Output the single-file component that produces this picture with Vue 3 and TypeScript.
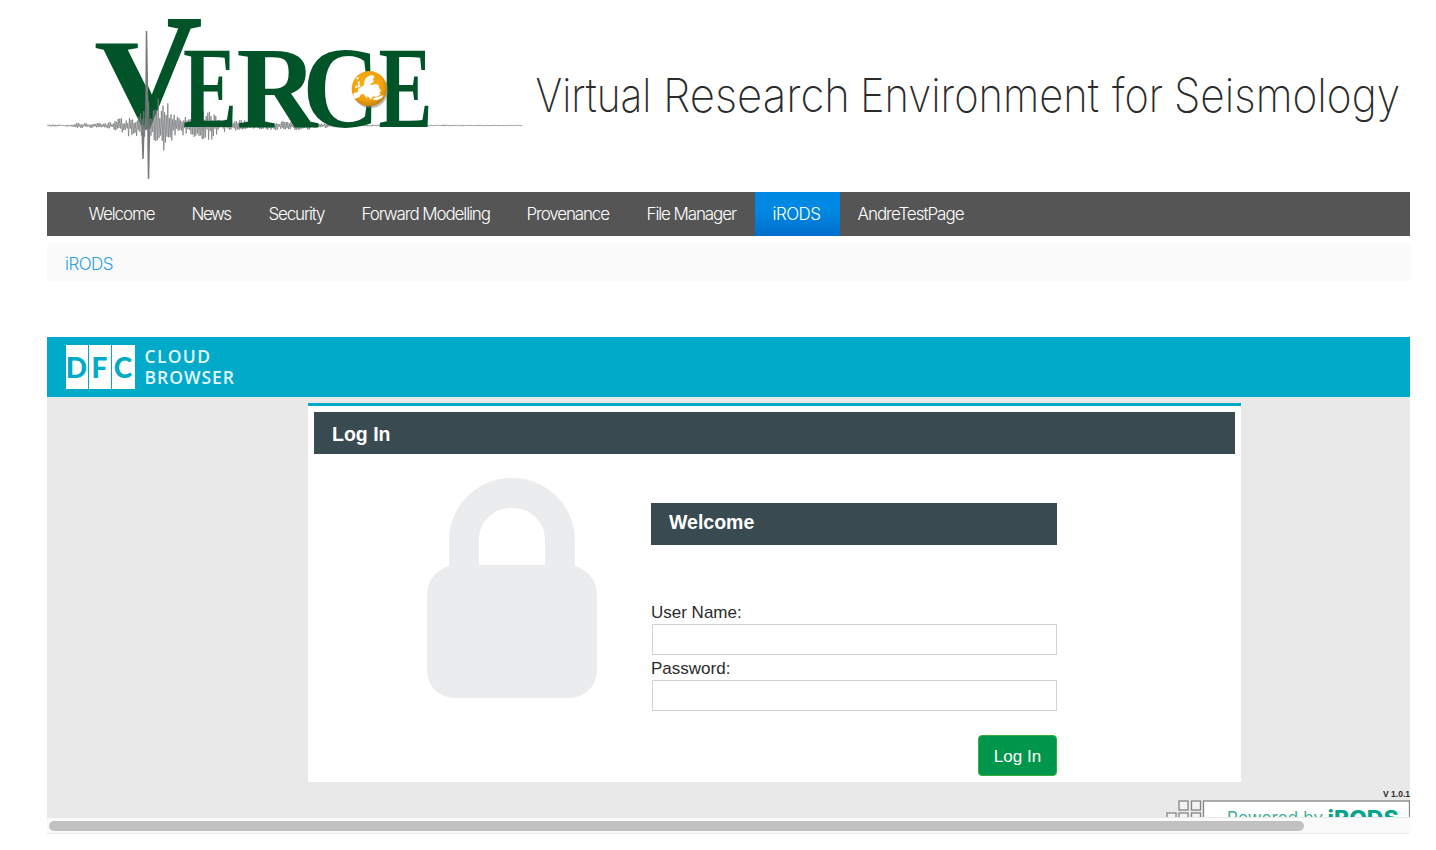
<script setup lang="ts">
import { ref } from 'vue'

interface NavItem {
  label: string
  width: number
  active?: boolean
}

const navItems: NavItem[] = [
  { label: 'Welcome', width: 67 },
  { label: 'News', width: 40.5 },
  { label: 'Security', width: 57 },
  { label: 'Forward Modelling', width: 129.5 },
  { label: 'Provenance', width: 83.5 },
  { label: 'File Manager', width: 90.5 },
  { label: 'iRODS', width: 48.5, active: true },
  { label: 'AndreTestPage', width: 107 },
]

const taglineWords = [
  { text: 'Virtual', x: 0.5, width: 116 },
  { text: 'Research', x: 128, width: 187 },
  { text: 'Environment', x: 325, width: 239 },
  { text: 'for', x: 577, width: 51 },
  { text: 'Seismology', x: 639, width: 226 },
]

const userName = ref('')
const password = ref('')

// Amplitude envelope of the seismogram: [x, up, down]
const envelope: [number, number, number][] = [
  [0, 1, 1], [26, 1, 1], [30, 3, 3], [62, 3, 3], [72, 7, 8], [90, 9, 14], [98, 26, 16],
  [106, 24, 22], [112, 28, 26], [122, 24, 26], [130, 13, 10], [142, 14, 10], [150, 17, 15],
  [165, 17, 15], [172, 7, 7], [200, 5, 5], [225, 5, 5], [260, 3, 4], [285, 2, 2], [310, 1, 1], [476, 0.5, 0.5],
]

function amplitude(x: number): [number, number] {
  for (let i = 1; i < envelope.length; i++) {
    const a = envelope[i - 1]
    const b = envelope[i]
    if (x <= b[0]) {
      const t = (x - a[0]) / (b[0] - a[0])
      return [a[1] + (b[1] - a[1]) * t, a[2] + (b[2] - a[2]) * t]
    }
  }
  return [0.5, 0.5]
}

function buildTrace(): string {
  let seed = 17
  let d = 'M0 107.5'
  for (let x = 0.8; x < 476; x += 0.8) {
    seed = (seed * 16807) % 2147483647
    const r = 0.25 + 0.75 * Math.pow(seed / 2147483647, 1.2)
    const [up, down] = amplitude(x)
    const odd = Math.round(x / 0.8) % 2 === 1
    d += `L${x.toFixed(1)} ${(107.5 + (odd ? -up : down) * r).toFixed(1)}`
  }
  return d
}

const trace = buildTrace()
</script>

<template>
  <div class="page">
    <header class="banner">
      <svg class="verce" width="477" height="170" viewBox="0 0 477 170">
        <defs>
          <clipPath id="armLeft"><rect x="0" y="0" width="101" height="170" /></clipPath>
          <clipPath id="armRight"><path d="M101 -5H190V170H96V108L101 96z" /></clipPath>
          <radialGradient id="globe" cx="0.45" cy="0.4" r="0.62">
            <stop offset="0" stop-color="#fbb117" />
            <stop offset="0.7" stop-color="#f0a20c" />
            <stop offset="1" stop-color="#bd7d10" />
          </radialGradient>
          <text id="vee" class="serif" x="0" y="0" font-size="100">V</text>
        </defs>
        <g clip-path="url(#armLeft)"><use href="#vee" transform="translate(47 109) scale(1.48 1.28)" /></g>
        <g clip-path="url(#armRight)"><use href="#vee" transform="translate(38.500 108) scale(1.610 1.600)" stroke="#005427" stroke-width="1.200" /></g>
        <path :d="trace" fill="none" stroke="#77797b" stroke-width="0.75" />
        <path d="M98.800 112L99.500 13L100.800 100L101.500 161L102.500 112M95 107L96 141L97 107" fill="none" stroke="#77797b" stroke-width="1.500" />
        <g class="serif" font-size="117">
          <text x="136" y="109" textLength="54" lengthAdjust="spacingAndGlyphs">E</text>
          <text x="189.500" y="109" textLength="81" lengthAdjust="spacingAndGlyphs">R</text>
          <text x="255.500" y="109" textLength="77" lengthAdjust="spacingAndGlyphs">C</text>
          <text x="331.500" y="109" textLength="54" lengthAdjust="spacingAndGlyphs">E</text>
        </g>
        <circle cx="323.500" cy="72.500" r="17.800" fill="#777" opacity="0.45" />
        <circle cx="322.300" cy="70.700" r="17.600" fill="url(#globe)" />
        <path
          transform="translate(298 46) scale(0.3333)"
          fill="#fff"
          d="M57 54l6-12 10-7 11-2 4 6-4 6 2 8-6 5-6 5 8 0 8-3 10 2 3 10 5 8-5 7 4 6-8 2-7 5-6-3-6 4-2 7-5-7-7-6 2 9-5-5-7-8-7-1-5 8-12 6-7-4 1-13 13-3 0-8 8-6 8-4 4-9zM37 53l7-1 0 8 3 8-10 3 3-9zM33 64l4 2-2 6-5 0zM34 41l7-2 0 5-6 3zM84 103l14-4 17-6-4 9-14 6-11 0z"
        />
      </svg>
      <svg class="tagline" width="880" height="70" viewBox="0 0 880 70">
        <text
          v-for="word in taglineWords"
          :key="word.text"
          :x="word.x"
          y="50"
          :textLength="word.width"
          lengthAdjust="spacingAndGlyphs"
        >{{ word.text }}</text>
      </svg>
    </header>

    <nav class="nav">
      <a v-for="item in navItems" :key="item.label" class="nav-item" :class="{ active: item.active }">
        <svg :width="item.width" height="30">
          <text x="-0.500" y="20" :textLength="item.width">{{ item.label }}</text>
        </svg>
      </a>
    </nav>

    <div class="crumbs">
      <svg width="50" height="30">
        <text x="0" y="20" textLength="48.500">iRODS</text>
      </svg>
    </div>

    <main class="frame">
      <div class="cloudbar">
        <div class="tiles"><span>D</span><span>F</span><span>C</span></div>
        <svg class="cloud-name" width="94" height="44" viewBox="0 0 94 44">
          <text x="-0.500" y="18" textLength="65.500">CLOUD</text>
          <text x="-0.500" y="38.500" textLength="89.500">BROWSER</text>
        </svg>
      </div>

      <section class="panel">
        <h2 class="bar">Log In</h2>
        <div class="panel-body">
          <svg class="lock" width="170" height="220" viewBox="0 0 170 220">
            <path fill="#ebeced" fill-rule="evenodd" d="M22 88V63C22 28 50 0 85 0s63 28 63 63v25c13 4 22 15 22 29v75c0 16-12 28-28 28H28c-16 0-28-12-28-28v-75c0-14 9-25 22-29zM52 87h66V62c0-18-14-32-33-32S52 44 52 62z" />
          </svg>
          <form class="login" @submit.prevent>
            <h2 class="bar welcome">Welcome</h2>
            <label for="user">User Name:</label>
            <input id="user" v-model="userName" type="text" />
            <label for="pass">Password:</label>
            <input id="pass" v-model="password" type="password" />
            <button type="submit">Log In</button>
          </form>
        </div>
      </section>

      <div class="version">V 1.0.1</div>
      <svg class="powered" width="244" height="17" viewBox="0 0 244 17">
        <g fill="#f3f3f3" stroke="#858585" stroke-width="1.300">
          <rect x="13" y="1" width="9" height="9" />
          <rect x="25.500" y="1" width="9" height="9" />
          <rect x="1" y="13" width="9" height="9" />
          <rect x="13" y="13" width="9" height="9" />
          <rect x="25.500" y="13" width="9" height="9" />
          <rect x="37.500" y="1" width="206" height="40" fill="#fff" />
        </g>
        <text class="by" x="61" y="23.500" textLength="96">Powered by</text>
        <text class="brand" x="161.500" y="25.500" textLength="71" lengthAdjust="spacingAndGlyphs">iRODS</text>
      </svg>
    </main>
    <div class="scroll"><div class="thumb"></div></div>
  </div>
</template>

<style>
body {
  background: #fff;
  overflow: hidden;
}
</style>

<style scoped>
.page {
  width: 1363px;
  height: 850px;
  padding-left: 47px;
  font-family: "Liberation Sans", Arial, sans-serif;
  color: #2b2b2b;
}
.banner {
  display: flex;
  height: 192px;
}
.verce {
  margin-top: 18px;
  overflow: visible;
}
.serif {
  font-family: "Liberation Serif", serif;
  font-weight: 700;
  fill: #005427;
}
.tagline {
  margin: 62px 0 0 11px;
  overflow: visible;
}
.tagline text {
  font: 200 47px Inter, sans-serif;
  fill: #2b2b2b;
}
.nav {
  display: flex;
  height: 44px;
  padding-left: 24px;
  background: #555;
}
.nav-item {
  padding: 8px 18px 0;
}
.nav-item svg,
.crumbs svg {
  display: block;
  overflow: visible;
}
.nav-item text,
.crumbs text {
  font: 300 17px Inter, sans-serif;
  fill: #fff;
}
.nav-item.active {
  background: linear-gradient(#0089e3 40%, #006fcb);
}
.crumbs {
  box-sizing: border-box;
  height: 38px;
  margin-top: 7px;
  padding: 7px 18px;
  background: #fafafa;
  border-radius: 3px;
}
.crumbs text {
  fill: #2b9de9;
}
.frame {
  height: 481px;
  margin-top: 55.500px;
  overflow: hidden;
  background: #e9e9e9;
}
.cloudbar {
  display: flex;
  box-sizing: border-box;
  height: 60.500px;
  padding: 8.500px 18.500px;
  background: #00aac8;
}
.tiles {
  display: grid;
  grid-template-columns: 22px 22px 23px;
  gap: 1px;
  height: 44px;
}
.tiles span {
  background: #fff;
  color: #00aac8;
  font: 900 28px/44px Lato, sans-serif;
  text-align: center;
}
.cloud-name {
  margin-left: 10px;
  overflow: visible;
}
.cloud-name text {
  font: 600 17.500px "Open Sans", sans-serif;
  fill: #e4f7fb;
}
.panel {
  box-sizing: border-box;
  width: 933px;
  height: 379px;
  margin: 6px 0 0 261px;
  padding: 6px;
  border-top: 3px solid #00aac8;
  background: #fff;
}
.bar {
  box-sizing: border-box;
  height: 42px;
  margin: 0;
  padding-left: 18px;
  background: #394a50;
  color: #fff;
  font-size: 19.500px;
  font-weight: 700;
  line-height: 45px;
}
.panel-body {
  display: flex;
  padding-left: 113px;
}
.lock {
  margin-top: 24px;
}
.login {
  display: flex;
  flex-direction: column;
  width: 406px;
  margin: 49px 0 0 54px;
}
.welcome {
  margin-bottom: 56px;
  line-height: 38px;
}
label {
  height: 22.500px;
  font-size: 17px;
  line-height: 24px;
}
input {
  box-sizing: border-box;
  height: 31px;
  margin: 0 0 2.500px 1px;
  border: 1px solid #d2d2d2;
  background: #fff;
}
button {
  box-sizing: border-box;
  align-self: flex-end;
  width: 79px;
  height: 41px;
  margin-top: 22px;
  padding: 2px 0 0;
  border: 1px solid #39ad3c;
  border-radius: 4px;
  background: #00964b;
  color: #fff;
  font: 17px "Liberation Sans", Arial, sans-serif;
}
.version {
  height: 18px;
  font-size: 8.500px;
  font-weight: 700;
  line-height: 25px;
  text-align: right;
}
.powered {
  display: block;
  margin-left: auto;
}
.by {
  font: 400 17px Inter, sans-serif;
  fill: #42ad97;
}
.brand {
  font: 800 21px Inter, sans-serif;
  fill: #08a38b;
}
.scroll {
  box-sizing: border-box;
  height: 16.500px;
  padding: 3px 2px;
  border-bottom: 1px solid #ebebeb;
  background: #fafafa;
}
.thumb {
  width: 1255px;
  height: 10px;
  border-radius: 5px;
  background: #c1c1c1;
}
</style>
